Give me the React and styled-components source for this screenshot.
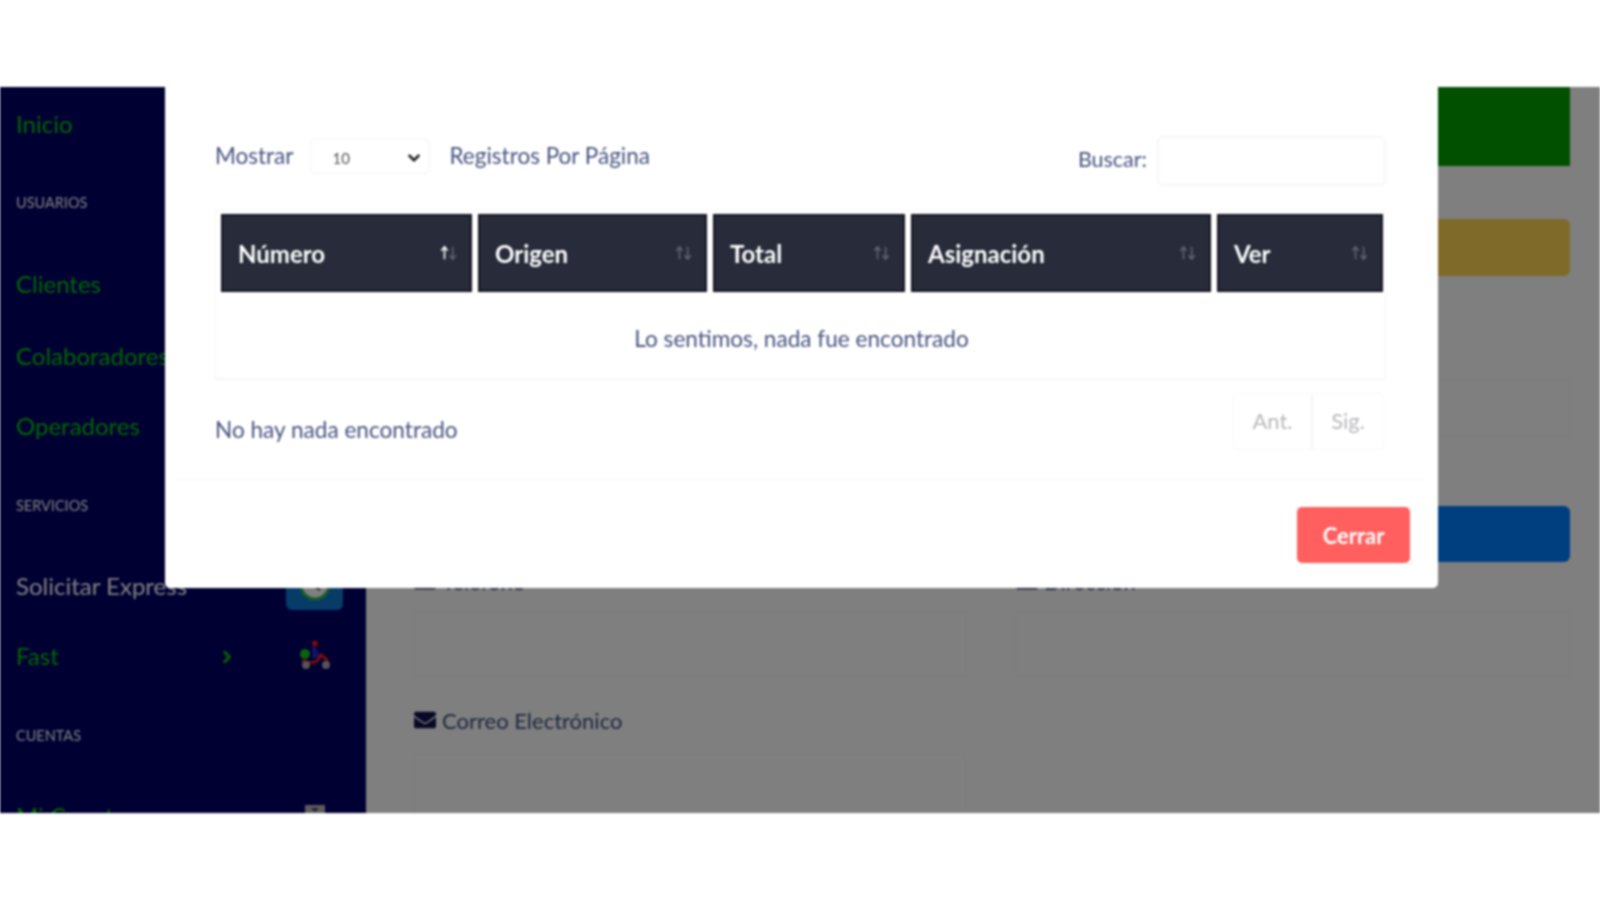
import React from "react";
import styled, { createGlobalStyle } from "styled-components";
import { FaEnvelope } from "react-icons/fa";
import { ChevronRight, ChevronDown } from "lucide-react";

const GlobalStyle = createGlobalStyle`
  html, body {
    margin: 0;
    background: #fff;
    overflow: hidden;
  }
  * { box-sizing: border-box; }
`;

const Page = styled.div`
  padding-top: 87px;
  height: 900px;
  background: #fff;
  font-family: Lato, "Open Sans", sans-serif;
  filter: blur(0.9px);
`;

const Viewport = styled.div`
  position: relative;
  display: flex;
  height: 726px;
  overflow: hidden;
  background: #fff;
`;

const Sidebar = styled.aside`
  flex: 0 0 366px;
  padding: 1px 0 0 16px;
  background: #000066;
`;

const NavRow = styled.div`
  display: flex;
  align-items: center;
  height: ${(p) => p.$height || 70}px;
  padding-right: 23px;
  font-size: 24px;
  white-space: nowrap;
  color: ${(p) => (p.$plain ? "#fff" : "#00d000")};
`;

const NavLabel = styled.span`
  flex: 1;
`;

const NavSection = styled.div`
  display: flex;
  align-items: center;
  height: ${(p) => p.$height}px;
  font-size: 14.5px;
  color: #fff;
  text-transform: uppercase;
`;

const Chevron = styled(ChevronRight)`
  margin: 3px 49px 0 0;
`;

const IconSlot = styled.div`
  display: flex;
  align-items: center;
  justify-content: center;
  width: 57px;
  height: 50px;
  border-radius: 6px;
  background: ${(p) => p.$bg || "transparent"};
`;

const Main = styled.main`
  flex: 1;
  padding: 0 30px 0 48px;
`;

const Banner = styled.div`
  height: 79px;
  background: #00a000;
`;

const YellowBar = styled.div`
  height: 57px;
  margin-top: 53px;
  border-radius: 6px;
  background: #ffd455;
`;

const Field = styled.div`
  height: ${(p) => p.$height}px;
  margin-top: ${(p) => p.$top || 0}px;
  border: 1px solid #f7f7f7;
`;

const BlueBar = styled.div`
  height: 56px;
  margin-top: 69px;
  border-radius: 6px;
  background: #007eff;
`;

const FormGrid = styled.div`
  display: grid;
  grid-template-columns: 552px 554px;
  column-gap: 50px;
  margin-top: 7px;
`;

const FieldLabel = styled.div`
  display: flex;
  align-items: center;
  gap: 6px;
  height: 24px;
  margin-top: ${(p) => p.$top || 0}px;
  font-size: 22px;
  color: #3a5080;
  white-space: nowrap;

  svg {
    color: #101050;
  }
`;

const FormColumn = styled.div`
  display: flex;
  flex-direction: column;
`;

const Overlay = styled.div`
  position: absolute;
  inset: 0;
  background: rgba(0, 0, 0, 0.5);
`;

const Modal = styled.div`
  width: 1273px;
  height: 501px;
  margin-left: 165px;
  background: #fff;
  border-radius: 0 0 5px 5px;
`;

const ModalBody = styled.div`
  padding: 49px 52px 0 50px;
`;

const Controls = styled.div`
  display: flex;
  justify-content: space-between;
  align-items: flex-start;
  height: 50px;
  color: #46537f;
  font-size: 22.5px;
`;

const Group = styled.div`
  display: flex;
  align-items: center;
  gap: ${(p) => p.$gap}px;
  height: ${(p) => p.$height}px;
  margin-top: ${(p) => p.$top || 0}px;
`;

const GroupText = styled.span`
  padding-bottom: ${(p) => p.$lift || 0}px;
  font-size: ${(p) => p.$size || 22.5}px;
`;

const FakeSelect = styled.div`
  display: flex;
  align-items: center;
  justify-content: space-between;
  width: 120px;
  height: 35px;
  margin: 0 2px 0 -2px;
  padding: 2px 6px 0 22px;
  border: 1px solid #f5f5f7;
  border-radius: 5px;
  font-size: 15px;
  color: #555;

  svg {
    color: #222;
  }
`;

const SearchInput = styled.input`
  width: 229px;
  height: 50px;
  border: 2px solid #f6f6f8;
  border-radius: 6px;
  outline: none;
`;

const TableWrap = styled.div`
  height: 170px;
  margin-top: 24px;
  padding: 3px 3px 0 5px;
  border: 1px solid #f6f6f8;
  border-bottom-width: 2px;
`;

const HeadRow = styled.div`
  display: grid;
  grid-template-columns: 251px 229px 192px 300px 166px;
  column-gap: 6px;
`;

const HeadCell = styled.div`
  display: flex;
  align-items: center;
  justify-content: space-between;
  height: 78px;
  padding: 0 11px 0 15px;
  background: #282b3a;
  border: 2px solid #13131f;
  color: #fff;
  font-size: 24px;
  font-weight: 700;
`;

const EmptyRow = styled.div`
  display: flex;
  align-items: center;
  justify-content: center;
  height: 92px;
  font-size: 22.6px;
  color: #46537f;
`;

const TableFooter = styled.div`
  display: flex;
  justify-content: space-between;
  margin-top: 13px;
`;

const Info = styled.div`
  padding-top: 23px;
  font-size: 22.6px;
  color: #46537f;
`;

const Pager = styled.div`
  display: flex;
  height: 57px;
  margin-right: 2px;
  border: 1px solid #fafafb;
  border-radius: 5px;
`;

const PagerButton = styled.div`
  display: flex;
  align-items: center;
  justify-content: center;
  width: ${(p) => p.$width}px;
  padding-bottom: 3px;
  font-size: 22px;
  color: #b9b9bd;

  & + & {
    border-left: 2px solid #f6f6f8;
  }
`;

const Divider = styled.div`
  height: 1px;
  margin: 29px 14px 0 10px;
  background: #f6f6f8;
`;

const ModalFooter = styled.div`
  display: flex;
  justify-content: flex-end;
  padding: 27px 28px 0 0;
`;

const CloseButton = styled.button`
  width: 113px;
  height: 56px;
  border: none;
  border-radius: 5px;
  background: #ff5f5f;
  color: #fff;
  font-family: inherit;
  font-size: 22px;
  font-weight: 700;
`;

const SortArrows = ({ active }) => (
  <svg width="20" height="18" viewBox="0 0 22 20" fill="none" strokeWidth="1.8">
    <path d="M6 17V4M2.5 7.5 6 3l3.5 4.5" stroke={active ? "#fff" : "#5f6270"} />
    <path d="M15 3v13M11.5 12.5 15 17l3.5-4.5" stroke="#5f6270" />
  </svg>
);

const ExpressIcon = () => (
  <svg width="34" height="34" viewBox="0 0 34 34">
    <circle cx="17" cy="17" r="14" fill="#fff" stroke="#2fb84a" strokeWidth="3" />
    <path d="M11 12l6 3 6 8-8-4z" fill="#111" />
  </svg>
);

const ScooterIcon = () => (
  <svg width="32" height="30" viewBox="0 0 32 30">
    <circle cx="16" cy="3.5" r="3" fill="#f01818" />
    <path d="M13 7h4l5 11h-9z" fill="#2222cc" />
    <circle cx="6" cy="14" r="5" fill="#14c814" />
    <path d="M3 20c4 3 12 3 15 1l4-6 5 4 2 5" fill="none" stroke="#f01818" strokeWidth="3" />
    <circle cx="7" cy="25" r="4" fill="#aaa" />
    <circle cx="27" cy="25" r="4" fill="#aaa" />
  </svg>
);

const AccountIcon = () => (
  <svg width="22" height="22" viewBox="0 0 22 22">
    <rect x="1" y="1" width="20" height="20" fill="#bbb" />
    <path d="M7 4h8l-4 4z" fill="#446" />
  </svg>
);

const columns = ["Número", "Origen", "Total", "Asignación", "Ver"];

export default function App() {
  return (
    <Page>
      <GlobalStyle />
      <Viewport>
        <Sidebar>
          <NavRow>Inicio</NavRow>
          <NavSection $height={89}>Usuarios</NavSection>
          <NavRow $height={73}>Clientes</NavRow>
          <NavRow>Colaboradores</NavRow>
          <NavRow>Operadores</NavRow>
          <NavSection $height={90}>Servicios</NavSection>
          <NavRow $plain>
            <NavLabel>Solicitar Express</NavLabel>
            <IconSlot $bg="#0f77d0">
              <ExpressIcon />
            </IconSlot>
          </NavRow>
          <NavRow>
            <NavLabel>Fast</NavLabel>
            <Chevron size={20} strokeWidth={3} />
            <IconSlot>
              <ScooterIcon />
            </IconSlot>
          </NavRow>
          <NavSection $height={90}>Cuentas</NavSection>
          <NavRow>
            <NavLabel>Mi Cuenta</NavLabel>
            <IconSlot>
              <AccountIcon />
            </IconSlot>
          </NavRow>
        </Sidebar>
        <Main>
          <Banner />
          <YellowBar />
          <Field $height={57} $top={104} />
          <BlueBar />
          <FormGrid>
            <FormColumn>
              <FieldLabel>
                <FaEnvelope size={22} />
                Teléfono
              </FieldLabel>
              <Field $height={65} $top={18} />
              <FieldLabel $top={32}>
                <FaEnvelope size={22} />
                Correo Electrónico
              </FieldLabel>
              <Field $height={80} $top={22} />
            </FormColumn>
            <FormColumn>
              <FieldLabel>
                <FaEnvelope size={22} />
                Dirección
              </FieldLabel>
              <Field $height={65} $top={18} />
            </FormColumn>
          </FormGrid>
        </Main>
        <Overlay>
          <Modal>
            <ModalBody>
              <Controls>
                <Group $gap={18} $height={35} $top={3}>
                  <GroupText $lift={2}>Mostrar</GroupText>
                  <FakeSelect>
                    10
                    <ChevronDown size={18} strokeWidth={3.5} />
                  </FakeSelect>
                  <GroupText $lift={2}>Registros Por Página</GroupText>
                </Group>
                <Group $gap={10} $height={50}>
                  <GroupText $lift={4} $size={21.5}>Buscar:</GroupText>
                  <SearchInput />
                </Group>
              </Controls>
              <TableWrap>
                <HeadRow>
                  {columns.map((name, i) => (
                    <HeadCell key={name}>
                      {name}
                      <SortArrows active={i === 0} />
                    </HeadCell>
                  ))}
                </HeadRow>
                <EmptyRow>Lo sentimos, nada fue encontrado</EmptyRow>
              </TableWrap>
              <TableFooter>
                <Info>No hay nada encontrado</Info>
                <Pager>
                  <PagerButton $width={77}>Ant.</PagerButton>
                  <PagerButton $width={72}>Sig.</PagerButton>
                </Pager>
              </TableFooter>
            </ModalBody>
            <Divider />
            <ModalFooter>
              <CloseButton>Cerrar</CloseButton>
            </ModalFooter>
          </Modal>
        </Overlay>
      </Viewport>
    </Page>
  );
}
